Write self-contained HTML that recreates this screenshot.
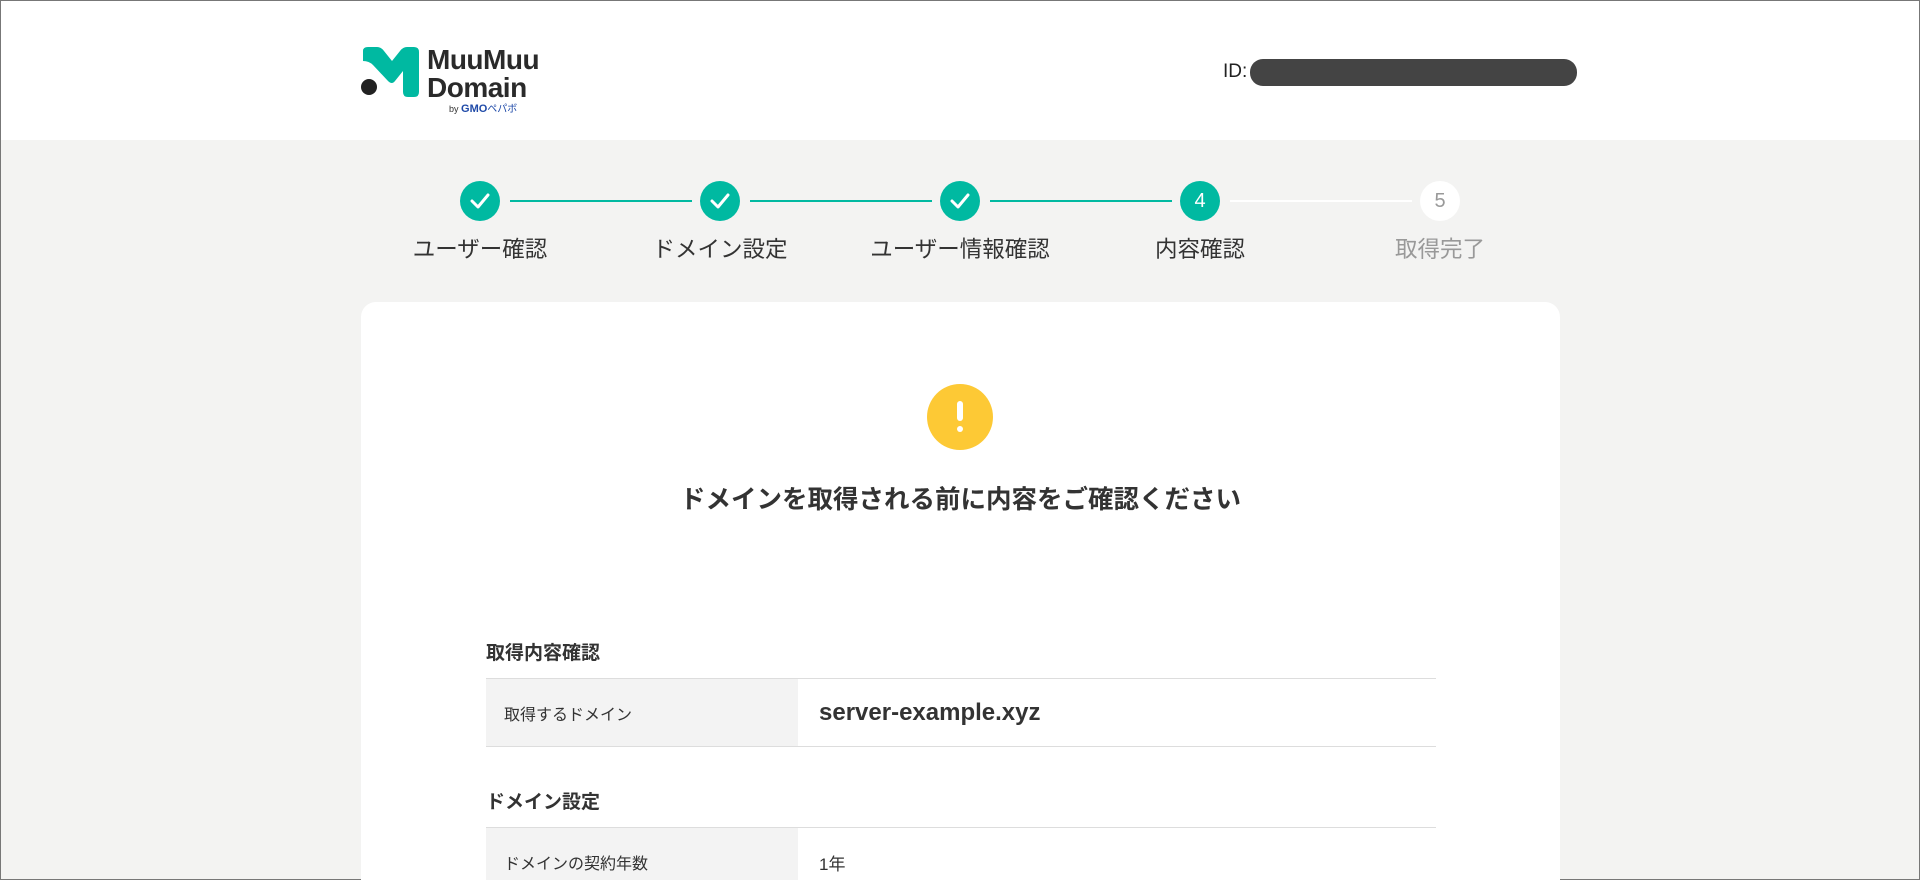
<!DOCTYPE html>
<html><head><meta charset="utf-8"><style>
*{margin:0;padding:0;box-sizing:border-box}
html,body{width:1920px;height:880px;overflow:hidden}
body{background:#f3f3f2;font-family:"Liberation Sans","Noto Sans CJK JP",sans-serif;color:#333;position:relative;border:1px solid #777}
.hdr{position:absolute;left:0;top:0;width:1918px;height:139px;background:#fff}
.abs{position:absolute}
.step{position:absolute;top:180px;width:40px;height:40px;border-radius:50%;background:#00b9a1;color:#fff;font-size:20px;text-align:center;line-height:40px}
.step svg{position:absolute;left:10px;top:11px}
.line{position:absolute;top:199px;height:2px;background:#00b9a1}
.lbl{position:absolute;top:231px;font-size:22.5px;width:240px;text-align:center;color:#333}
.card{position:absolute;left:360px;top:301px;width:1199px;height:600px;background:#fff;border-radius:15px}
.row{position:absolute;left:485px;width:950px;border-top:1px solid #ddd;border-bottom:1px solid #ddd}
.row .k{position:absolute;left:0;top:0;bottom:0;width:312px;background:#f3f3f3;font-size:16px;padding-left:18px;display:flex;align-items:center}
.row .v{position:absolute;left:333px;top:0;bottom:0;display:flex;align-items:center}
h3{position:absolute;left:485px;font-size:19px;font-weight:bold}
</style></head><body>
<div class="hdr">
 <svg class="abs" style="left:358px;top:46px" width="62" height="50" viewBox="0 0 62 50">
  <path d="M4 14 L4 4 Q4 0 9 0 L18 0 Q22 0 25 4 L33 14 L41 4 Q44 0 48 0 L55 0 Q60 0 60 5 L60 45 Q60 50 55 50 L49 50 Q44 50 44 45 L44 24 L36 34 Q33 38 29 34 L14 18 Q10 14 4 14Z" fill="#00b9a1"/>
  <circle cx="10" cy="40" r="8" fill="#222"/>
 </svg>
 <div class="abs" style="left:426px;top:45px;font-size:28px;font-weight:bold;line-height:28px;color:#2a2a2a;letter-spacing:-0.5px">MuuMuu<br>Domain</div>
 <div class="abs" style="left:448px;top:99px;font-size:9px;color:#333">by <b style="color:#1f4aa8;font-size:11px">GMO</b><span style="color:#1f4aa8;font-size:10px">ペパボ</span></div>
 <div class="abs" style="left:1222px;top:60px;font-size:19px;color:#222">ID:</div>
 <div class="abs" style="left:1249px;top:58px;width:327px;height:27px;border-radius:13px;background:#444"></div>
</div>

<div class="line" style="left:509px;width:182px"></div>
<div class="line" style="left:749px;width:182px"></div>
<div class="line" style="left:989px;width:182px"></div>
<div class="line" style="left:1229px;width:182px;background:#fff"></div>
<div class="step" style="left:459px"><svg width="20" height="18" viewBox="0 0 20 18"><path d="M2 9 L8 15 L18 3" fill="none" stroke="#fff" stroke-width="3" stroke-linecap="round" stroke-linejoin="round"/></svg></div>
<div class="step" style="left:699px"><svg width="20" height="18" viewBox="0 0 20 18"><path d="M2 9 L8 15 L18 3" fill="none" stroke="#fff" stroke-width="3" stroke-linecap="round" stroke-linejoin="round"/></svg></div>
<div class="step" style="left:939px"><svg width="20" height="18" viewBox="0 0 20 18"><path d="M2 9 L8 15 L18 3" fill="none" stroke="#fff" stroke-width="3" stroke-linecap="round" stroke-linejoin="round"/></svg></div>
<div class="step" style="left:1179px">4</div>
<div class="step" style="left:1419px;background:#fff;color:#999">5</div>
<div class="lbl" style="left:359px">ユーザー確認</div>
<div class="lbl" style="left:599px">ドメイン設定</div>
<div class="lbl" style="left:839px">ユーザー情報確認</div>
<div class="lbl" style="left:1079px">内容確認</div>
<div class="lbl" style="left:1319px;color:#999">取得完了</div>

<div class="card"></div>
<div class="abs" style="left:926px;top:383px;width:66px;height:66px;border-radius:50%;background:#fdc935">
 <div class="abs" style="left:30px;top:17px;width:6px;height:20px;border-radius:3px;background:#fff"></div>
 <div class="abs" style="left:30px;top:42px;width:6px;height:6px;border-radius:3px;background:#fff"></div>
</div>
<div class="abs" style="left:360px;top:478px;width:1199px;text-align:center;font-size:25.5px;font-weight:bold;color:#333">ドメインを取得される前に内容をご確認ください</div>

<h3 style="top:637px">取得内容確認</h3>
<div class="row" style="top:677px;height:69px"><div class="k">取得するドメイン</div><div class="v" style="font-size:24px;font-weight:bold">server-example.xyz</div></div>
<h3 style="top:786px">ドメイン設定</h3>
<div class="row" style="top:826px;height:70px"><div class="k">ドメインの契約年数</div><div class="v" style="font-size:17px">1年</div></div>
</body></html>
